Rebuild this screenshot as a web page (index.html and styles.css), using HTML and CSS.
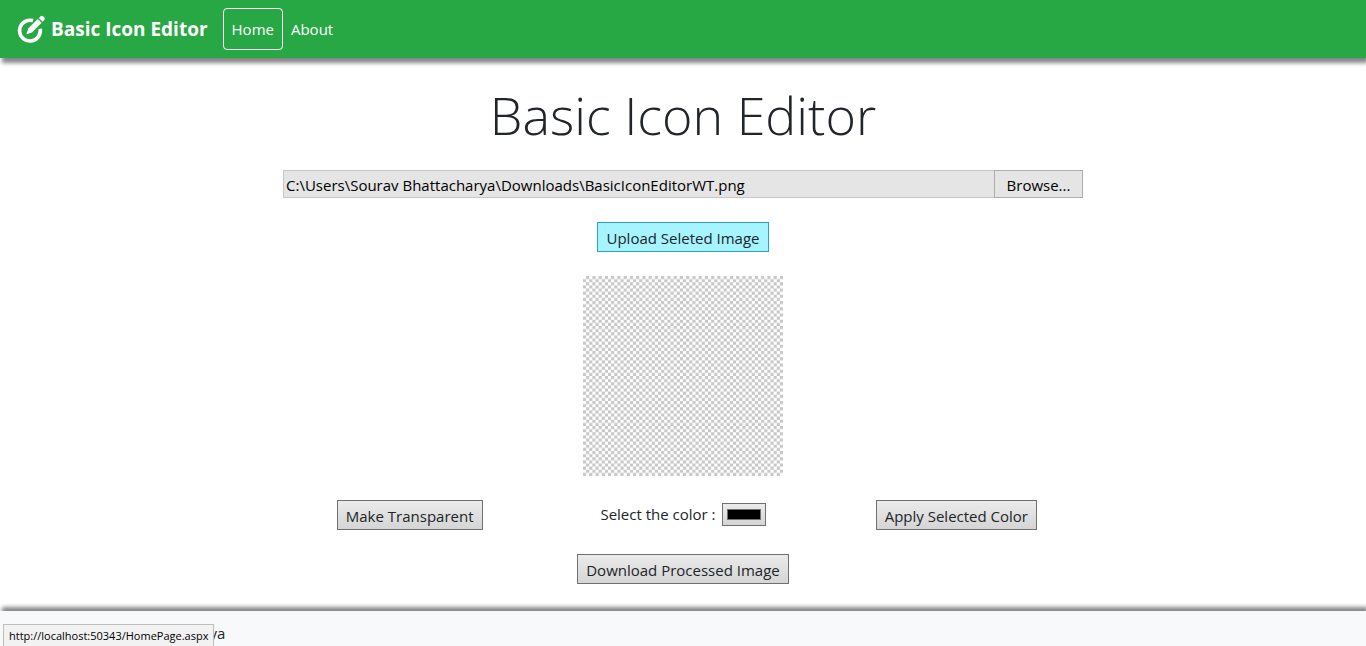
FILE: index.html
```html
<!DOCTYPE html>
<html lang="en">
<head>
<meta charset="utf-8">
<title>Basic Icon Editor</title>
<link rel="stylesheet" href="styles.css">
</head>
<body>
<header class="navbar">
  <a class="brand" href="#">
    <svg class="logo" viewBox="0 0 30 30" aria-hidden="true">
      <path d="M17 6.6Q15.500 6.200 13.900 6.200A10.400 10.400 0 1 0 24.200 14.800" fill="none" stroke="#fff" stroke-width="3.600"/>
      <path d="M10.400 20.200L12.200 14.600L21.800 5L25.600 8.800L16 18.400Z" fill="#fff"/>
      <path d="M22.900 3.900L24.600 2.300Q26 1.200 27.400 2.500L28.200 3.300Q29.400 4.700 28.200 6L26.600 7.700Z" fill="#fff"/>
    </svg>
    <span>Basic Icon Editor</span>
  </a>
  <nav class="nav">
    <a class="nav-link active" href="#">Home</a>
    <a class="nav-link" href="#">About</a>
  </nav>
</header>
<main class="content">
  <h1 class="title">Basic Icon Editor</h1>
  <div class="file-picker">
    <input class="file-path" type="text" aria-label="Selected image" readonly value="C:\Users\Sourav Bhattacharya\Downloads\BasicIconEditorWT.png">
    <button class="browse" type="button">Browse...</button>
  </div>
  <button class="button upload" type="button">Upload Seleted Image</button>
  <svg class="preview" viewBox="0 0 64 64" role="img" aria-label="Image preview">
    <defs>
      <pattern id="checker" width="64" height="2" patternUnits="userSpaceOnUse">
        <path d="M1 .5H64" stroke="#c8c8c8" stroke-dasharray="1 1"/>
        <path d="M0 1.500H64" stroke="#c8c8c8" stroke-dasharray="1 1"/>
      </pattern>
    </defs>
    <rect width="64" height="64" fill="url(#checker)"/>
  </svg>
  <div class="tools">
    <div class="tool"><button class="button" type="button">Make Transparent</button></div>
    <div class="tool">
      <label class="color-label" for="color">Select the color :</label>
      <input class="color" id="color" type="color" value="#000000">
    </div>
    <div class="tool"><button class="button" type="button">Apply Selected Color</button></div>
  </div>
  <button class="button" type="button">Download Processed Image</button>
</main>
<footer class="footer">Sourav Bhattacharya</footer>
<div class="status">http://localhost:50343/HomePage.aspx</div>
</body>
</html>
```
FILE: styles.css
```css
* { box-sizing: border-box; }
html { height: 100%; }
body {
  margin: 0;
  min-height: 100%;
  display: flex;
  flex-direction: column;
  overflow: hidden;
  color: #212529;
  background: #fff;
  font: 15px/24px "Segoe UI", "Open Sans", sans-serif;
}
button, input { font: inherit; color: inherit; }
.navbar {
  display: flex;
  align-items: center;
  gap: 15px;
  padding: 8px 16px;
  background: #28a745;
  box-shadow: 2px 5px 4px 0 #888;
}
.brand, .nav-link { color: #fff; text-decoration: none; }
.brand {
  display: flex;
  align-items: center;
  gap: 5px;
  font-size: 19px;
  font-weight: 700;
}
.logo { width: 30px; height: 30px; }
.nav { display: flex; align-items: center; }
.nav-link { padding: 8px; }
.active { border: 1px solid #fff; border-radius: 4px; }
.content {
  display: flex;
  flex-direction: column;
  align-items: center;
  gap: 24px;
  padding: 26px 16px 27px;
}
.title { margin: 0; font-size: 52px; line-height: 62px; font-weight: 300; }
.file-picker { display: flex; width: 100%; max-width: 800px; height: 28px; }
.file-path {
  flex: 1;
  min-width: 0;
  padding: 3px 2px 1px;
  border: 1px solid #c8c8c8;
  border-right: 0;
  border-radius: 0;
  background: #e5e5e5;
  color: #000;
  outline: 0;
}
.browse {
  width: 89px;
  padding: 2px 0 0;
  border: 1px solid #adadad;
  background: #e5e5e5;
  color: #000;
}
.button {
  height: 30px;
  padding: 2px 8px 0;
  border: 1px solid #707070;
  background: linear-gradient(#ebebeb, #d5d5d5);
  line-height: 26px;
}
.upload { border-color: #2a9fd8; background: #a6f4ff; }
.preview { width: 200px; height: 200px; }
.tools {
  display: grid;
  grid-template-columns: repeat(3, 1fr);
  width: 100%;
  max-width: 820px;
}
.tool { display: flex; align-items: flex-start; justify-content: center; gap: 6px; }
.color-label { line-height: 28px; }
.color {
  width: 44px;
  height: 23px;
  margin: 3px 0 0;
  padding: 5px 4px;
  border: 1px solid #707070;
  background: linear-gradient(#ebebeb, #d5d5d5);
}
.color::-webkit-color-swatch-wrapper { padding: 0; }
.color::-webkit-color-swatch { border: 1px solid #707070; border-radius: 0; }
.footer {
  flex: 1;
  padding: 10px 80px 0;
  background: #f8f9fa;
  box-shadow: 2px -4px 4px 0 #888;
}
.status {
  position: fixed;
  left: 3px;
  bottom: 0;
  padding: 0 5px;
  border: 1px solid #bebebe;
  border-bottom: 0;
  background: #f2f2f2;
  color: #000;
  font-size: 11px;
  line-height: 21px;
}
```
